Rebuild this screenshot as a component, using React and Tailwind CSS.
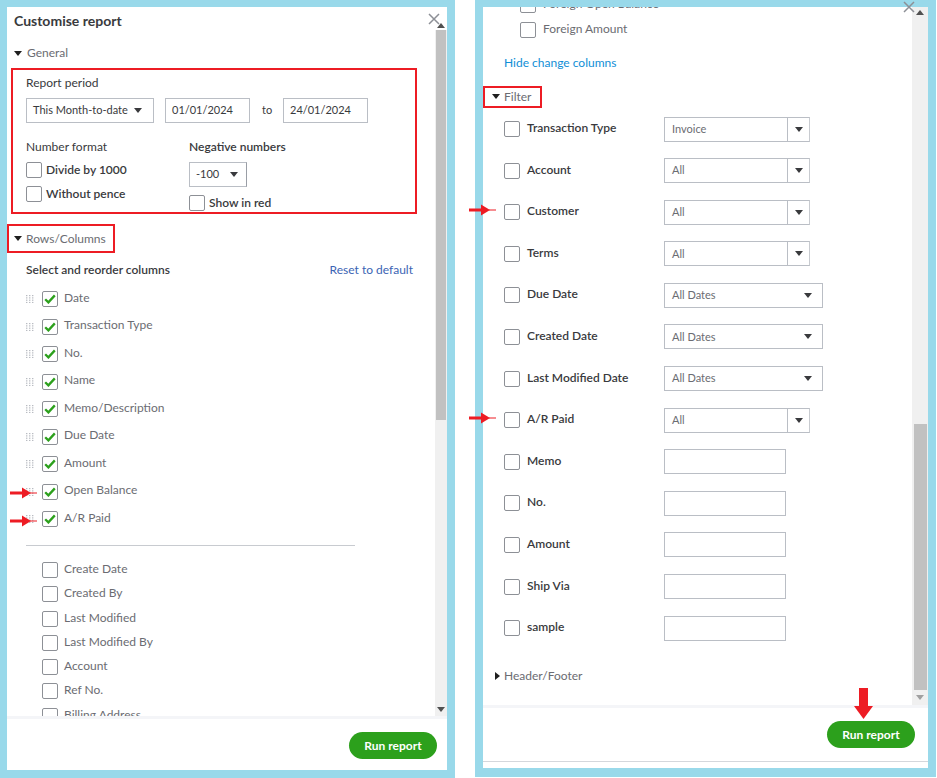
import React from "react";

const Caret = ({ className = "" }) => (
  <svg width="8" height="5" viewBox="0 0 8 5" className={className}>
    <path d="M0 0H8L4 5Z" fill="#393a3d" />
  </svg>
);

const Tri = () => (
  <svg width="8" height="5" viewBox="0 0 8 5" className="shrink-0">
    <path d="M0 0H8L4 5Z" fill="#1f1f1f" />
  </svg>
);

const TriRight = () => (
  <svg width="5" height="8" viewBox="0 0 5 8" className="shrink-0">
    <path d="M0 0V8L5 4Z" fill="#1f1f1f" />
  </svg>
);

function Box({ checked }) {
  return (
    <span className="w-4 h-4 shrink-0 rounded-[2px] border border-[#8d9096] bg-white flex items-center justify-center">
      {checked && (
        <svg width="12" height="10" viewBox="0 0 12 10">
          <path d="M1.2 5.2L4.4 8.4L10.8 1.4" stroke="#2ca01c" strokeWidth="2.3" fill="none" />
        </svg>
      )}
    </span>
  );
}

const Handle = () => (
  <svg width="8" height="8" viewBox="0 0 8 8" className="shrink-0">
    {[0, 1, 2].map((c) =>
      [0, 1, 2, 3].map((r) => (
        <rect key={c + "-" + r} x={c * 3} y={r * 2.3} width="1.4" height="1.2" fill="#b9bcc2" />
      ))
    )}
  </svg>
);

function Arrow({ className }) {
  return (
    <svg width="30" height="12" viewBox="0 0 30 12" className={className}>
      <rect x="0" y="4.5" width="14" height="3" fill="#ed1c24" />
      <path d="M12 0.5L21 6L12 11.5Z" fill="#ed1c24" />
      <rect x="20" y="5.5" width="7" height="1" fill="#ed1c24" />
    </svg>
  );
}

function Close({ className }) {
  return (
    <svg width="12" height="12" viewBox="0 0 12 12" className={className}>
      <path d="M1 1L11 11M11 1L1 11" stroke="#8d9096" strokeWidth="1.5" />
    </svg>
  );
}

function RunButton() {
  return (
    <button className="w-[88px] h-[27px] rounded-full bg-[#2ca01c] text-white text-[12px] font-bold leading-none">
      Run report
    </button>
  );
}

const leftCols = [
  "Date",
  "Transaction Type",
  "No.",
  "Name",
  "Memo/Description",
  "Due Date",
  "Amount",
  "Open Balance",
  "A/R Paid",
];
const leftMore = [
  "Create Date",
  "Created By",
  "Last Modified",
  "Last Modified By",
  "Account",
  "Ref No.",
  "Billing Address",
];

function LeftPanel() {
  return (
    <div className="w-[455px] h-[778px] bg-[#99d9ea] pt-[7px] pl-[7px] shrink-0">
      <div className="w-[440px] h-[763px] bg-white flex flex-col relative">
        <div className="h-[709px] flex overflow-hidden">
          <div className="flex-1 overflow-hidden">
            <div className="pl-[7px] pt-[4px] text-[14px] leading-[20px] font-bold text-[#393a3d]">
              Customise report
            </div>
            <div className="pl-[7px] mt-[14px] flex items-center gap-[5px] h-[16px] text-[12px] text-[#6b6c72]">
              <Tri />
              <span>General</span>
            </div>
            <div className="ml-[4px] mt-[7px] w-[406px] h-[146px] border-2 border-[#ed1c24] pl-[13px] pt-[5px]">
              <div className="h-[16px] leading-[16px] text-[12px] text-[#393a3d]">Report period</div>
              <div className="mt-[7px] flex items-center h-[25px]">
                <div className="w-[128px] h-[25px] border border-[#babec5] flex items-center justify-between pl-[6px] pr-[11px] text-[11px] text-[#393a3d]">
                  <span>This Month-to-date</span>
                  <Caret />
                </div>
                <div className="ml-[11px] w-[85px] h-[25px] border border-[#babec5] flex items-center pl-[6px] text-[11px] text-[#393a3d]">
                  01/01/2024
                </div>
                <span className="ml-[12px] w-[21px] text-[11px] text-[#393a3d]">to</span>
                <div className="w-[85px] h-[25px] border border-[#babec5] flex items-center pl-[6px] text-[11px] text-[#393a3d]">
                  24/01/2024
                </div>
              </div>
              <div className="mt-[16px] flex">
                <div className="w-[163px]">
                  <div className="h-[16px] leading-[16px] text-[12px] text-[#393a3d]">Number format</div>
                  <div className="mt-[7px] flex items-center gap-[4px] h-[16px] text-[12px] font-semibold text-[#393a3d]">
                    <Box />
                    <span>Divide by 1000</span>
                  </div>
                  <div className="mt-[8px] flex items-center gap-[4px] h-[16px] text-[12px] font-semibold text-[#393a3d]">
                    <Box />
                    <span>Without pence</span>
                  </div>
                </div>
                <div>
                  <div className="h-[16px] leading-[16px] text-[12px] font-semibold text-[#393a3d]">Negative numbers</div>
                  <div className="mt-[7px] w-[58px] h-[25px] border border-[#babec5] border-r-[#9a9ea6] flex items-center pl-[6px] gap-[11px] text-[11px] text-[#393a3d]">
                    <span>-100</span>
                    <Caret />
                  </div>
                  <div className="mt-[8px] flex items-center gap-[4px] h-[16px] text-[12px] font-semibold text-[#393a3d]">
                    <Box />
                    <span>Show in red</span>
                  </div>
                </div>
              </div>
            </div>
            <div className="mt-[10px] w-[108px] h-[29px] border-2 border-[#ed1c24] pl-[5px] flex items-center gap-[4px] text-[12px] text-[#6b6c72]">
              <Tri />
              <span>Rows/Columns</span>
            </div>
            <div className="mt-[9px] pl-[19px] pr-[22px] flex justify-between h-[16px] leading-[16px] text-[12px]">
              <span className="font-semibold text-[#393a3d]">Select and reorder columns</span>
              <span className="text-[#3b64b4]">Reset to default</span>
            </div>
            <div className="mt-[13px] pl-[19px] flex flex-col gap-[11.5px]">
              {leftCols.map((c) => (
                <div key={c} className="flex items-center h-[16px] text-[12px] text-[#6b6c72]">
                  <Handle />
                  <span className="ml-[8px]">
                    <Box checked />
                  </span>
                  <span className="ml-[6px] -mt-[3px]">{c}</span>
                </div>
              ))}
            </div>
            <div className="mt-[18px] ml-[19px] w-[329px] h-px bg-[#c8cbd0]" />
            <div className="mt-[16px] pl-[35px] flex flex-col gap-[8.3px]">
              {leftMore.map((c) => (
                <div key={c} className="flex items-center gap-[6px] h-[16px] text-[12px] text-[#6b6c72]">
                  <Box />
                  <span className="-mt-[2px]">{c}</span>
                </div>
              ))}
            </div>
          </div>
          <div className="w-[12px] h-full flex flex-col bg-[#f0f0f0]">
            <div className="h-[23px] bg-white flex items-end justify-center pb-[2px]">
              <svg width="8" height="5" viewBox="0 0 8 5">
                <path d="M0 5H8L4 0Z" fill="#505050" />
              </svg>
            </div>
            <div className="ml-px w-[10px] h-[390px] bg-[#c1c1c1]" />
            <div className="flex-1 flex items-end justify-center pb-[4px]">
              <svg width="8" height="5" viewBox="0 0 8 5">
                <path d="M0 0H8L4 5Z" fill="#505050" />
              </svg>
            </div>
          </div>
        </div>
        <div className="h-[3px] bg-[#f4f5f8]" />
        <div className="flex-1 flex justify-end items-start pt-[13px] pr-[10px]">
          <RunButton />
        </div>
        <Close className="absolute left-[421px] top-[6px]" />
      </div>
    </div>
  );
}

const filters = [
  { l: "Transaction Type", t: "a", v: "Invoice" },
  { l: "Account", t: "a", v: "All" },
  { l: "Customer", t: "a", v: "All" },
  { l: "Terms", t: "a", v: "All" },
  { l: "Due Date", t: "b", v: "All Dates" },
  { l: "Created Date", t: "b", v: "All Dates" },
  { l: "Last Modified Date", t: "b", v: "All Dates" },
  { l: "A/R Paid", t: "a", v: "All" },
  { l: "Memo", t: "c" },
  { l: "No.", t: "c" },
  { l: "Amount", t: "c" },
  { l: "Ship Via", t: "c" },
  { l: "sample", t: "c" },
];

function FilterControl({ f }) {
  if (f.t === "a")
    return (
      <div className="w-[146px] h-[25px] flex text-[11px] text-[#6b6c72]">
        <div className="w-[124px] h-full border border-[#babec5] flex items-center pl-[7px]">{f.v}</div>
        <div className="flex-1 h-full border-y border-r border-y-[#babec5] border-r-[#c8cbd0] flex items-center justify-center">
          <Caret />
        </div>
      </div>
    );
  if (f.t === "b")
    return (
      <div className="w-[159px] h-[25px] border border-[#babec5] flex items-center justify-between pl-[7px] pr-[10px] text-[11px] text-[#6b6c72]">
        <span>{f.v}</span>
        <Caret />
      </div>
    );
  return <div className="w-[122px] h-[25px] border border-[#babec5]" />;
}

function RightPanel() {
  return (
    <div className="w-[461px] h-[777px] bg-[#99d9ea] pt-[7px] pl-[8px] shrink-0">
      <div className="w-[445px] h-[761px] bg-white flex flex-col relative">
        <div className="h-[698px] flex overflow-hidden">
          <div className="flex-1 overflow-hidden">
            <div className="-mt-[10px] pl-[37px] flex flex-col gap-[8.5px]">
              {["Foreign Open Balance", "Foreign Amount"].map((c) => (
                <div key={c} className="flex items-center gap-[7px] h-[16px] text-[12px] text-[#6b6c72]">
                  <Box />
                  <span className="-mt-[2px]">{c}</span>
                </div>
              ))}
            </div>
            <div className="mt-[17px] pl-[21px] h-[16px] leading-[16px] text-[12px] text-[#108ed6]">
              Hide change columns
            </div>
            <div className="mt-[15px] w-[59px] h-[22px] border-2 border-[#ed1c24] pl-[7px] flex items-center gap-[4px] text-[12px] text-[#6b6c72]">
              <Tri />
              <span>Filter</span>
            </div>
            <div className="mt-[9px] pl-[21px] flex flex-col">
              {filters.map((f) => (
                <div key={f.l} className="h-[41.6px] flex items-start">
                  <div className="w-[160px] h-[25px] flex items-center gap-[7px] text-[12px] font-semibold text-[#393a3d]">
                    <Box />
                    <span className="-mt-[2px]">{f.l}</span>
                  </div>
                  <FilterControl f={f} />
                </div>
              ))}
            </div>
            <div className="mt-[11px] pl-[12px] flex items-center gap-[4px] h-[16px] text-[12px] text-[#6b6c72]">
              <TriRight />
              <span>Header/Footer</span>
            </div>
          </div>
          <div className="w-[16px] h-full flex flex-col bg-[#f0f0f0]">
            <div className="h-[17px] flex items-start justify-center pt-[3px]">
              <svg width="8" height="5" viewBox="0 0 8 5">
                <path d="M0 5H8L4 0Z" fill="#505050" />
              </svg>
            </div>
            <div className="h-[400px]" />
            <div className="ml-[2px] w-[13px] h-[266px] bg-[#c1c1c1]" />
            <div className="flex-1 flex items-center justify-center">
              <svg width="8" height="5" viewBox="0 0 8 5">
                <path d="M0 0H8L4 5Z" fill="#a0a0a0" />
              </svg>
            </div>
          </div>
        </div>
        <div className="h-[3px] bg-[#f4f5f8]" />
        <div className="flex-1 flex justify-end items-start pt-[13px] pr-[13px]">
          <RunButton />
        </div>
        <div className="h-px bg-[#d4d7dc]" />
        <div className="h-[6px]" />
        <Close className="absolute left-[420px] -top-[6px]" />
      </div>
    </div>
  );
}

export default function App() {
  return (
    <div className="w-[937px] h-[778px] bg-white flex relative overflow-hidden font-['Lato','Open_Sans',sans-serif]">
      <LeftPanel />
      <div className="w-[20px] shrink-0" />
      <RightPanel />
      <Arrow className="absolute left-[10px] top-[487px]" />
      <Arrow className="absolute left-[10px] top-[515px]" />
      <Arrow className="absolute left-[469px] top-[204px]" />
      <Arrow className="absolute left-[469px] top-[412px]" />
      <svg width="20" height="32" viewBox="0 0 20 32" className="absolute left-[854px] top-[688px]">
        <rect x="5" y="0" width="9" height="19" fill="#ed1c24" />
        <path d="M0 18H19L9.5 31Z" fill="#ed1c24" />
      </svg>
    </div>
  );
}
